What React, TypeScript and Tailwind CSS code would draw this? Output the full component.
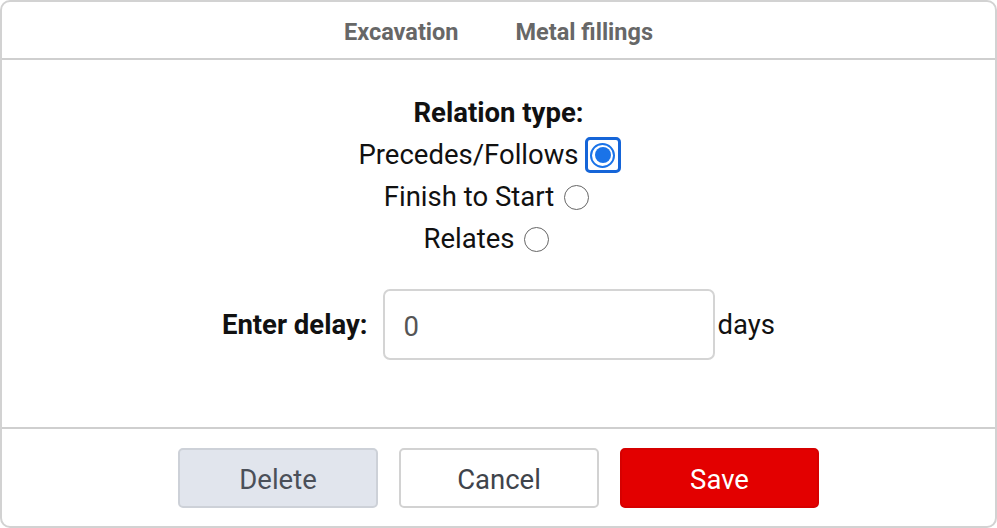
import React from "react";

function Radio({ checked }: { checked?: boolean }) {
  if (checked) {
    return (
      <span className="inline-flex items-center justify-center w-[36px] h-[36px] rounded-[5px] border-[3px] border-[#1565d8] ml-[6px] mr-[18px]">
        <span className="w-[25px] h-[25px] rounded-full border-[2px] border-[#1a73e8] flex items-center justify-center">
          <span className="w-[16px] h-[16px] rounded-full bg-[#1a73e8]" />
        </span>
      </span>
    );
  }
  return <span className="inline-block w-[25px] h-[25px] rounded-full border-[1.5px] border-[#666] ml-[10px] mr-[24px]" />;
}

export default function App() {
  return (
    <div className="w-[997px] h-[528px] bg-white" style={{ fontFamily: "Roboto, 'Liberation Sans', sans-serif" }}>
      <div className="w-full h-full border-[2px] border-[#d2d2d2] rounded-[10px] flex flex-col overflow-hidden">
        <div className="h-[58px] border-b-[2px] border-[#cfcfcf] flex items-center justify-center gap-[57px] text-[23.5px] font-bold text-[#676767] pt-[5px]">
          <span>Excavation</span>
          <span>Metal fillings</span>
        </div>
        <div className="flex-1 flex flex-col items-center pt-[32px] text-[27.5px] text-[#111]">
          <div className="h-[42px] flex items-center font-bold">Relation type:</div>
          <div className="h-[42px] flex items-center">Precedes/Follows<Radio checked /></div>
          <div className="h-[42px] flex items-center">Finish to Start<Radio /></div>
          <div className="h-[42px] flex items-center">Relates<Radio /></div>
          <div className="mt-[29px] flex items-center">
            <span className="font-bold mr-[15px]">Enter delay:</span>
            <div className="w-[332px] h-[71px] border-[2px] border-[#d4d4d4] rounded-[7px] flex items-center px-[19px] pt-[4px] text-[#555]">0</div>
            <span className="ml-[3px]">days</span>
          </div>
        </div>
        <div className="h-[99px] border-t-[2px] border-[#cfcfcf] flex items-center justify-center gap-[21px] text-[27.5px]">
          <button className="w-[200px] h-[60px] rounded-[5px] border-[2px] border-[#cdd1d8] bg-[#e1e5ed] text-[#4b5059] pt-[5px]">Delete</button>
          <button className="w-[200px] h-[60px] rounded-[5px] border-[2px] border-[#d2d2d2] bg-white text-[#3f444b] pt-[5px]">Cancel</button>
          <button className="w-[199px] h-[60px] rounded-[5px] border-[2px] border-[#d60000] bg-[#e30000] text-white pt-[5px]">Save</button>
        </div>
      </div>
    </div>
  );
}
